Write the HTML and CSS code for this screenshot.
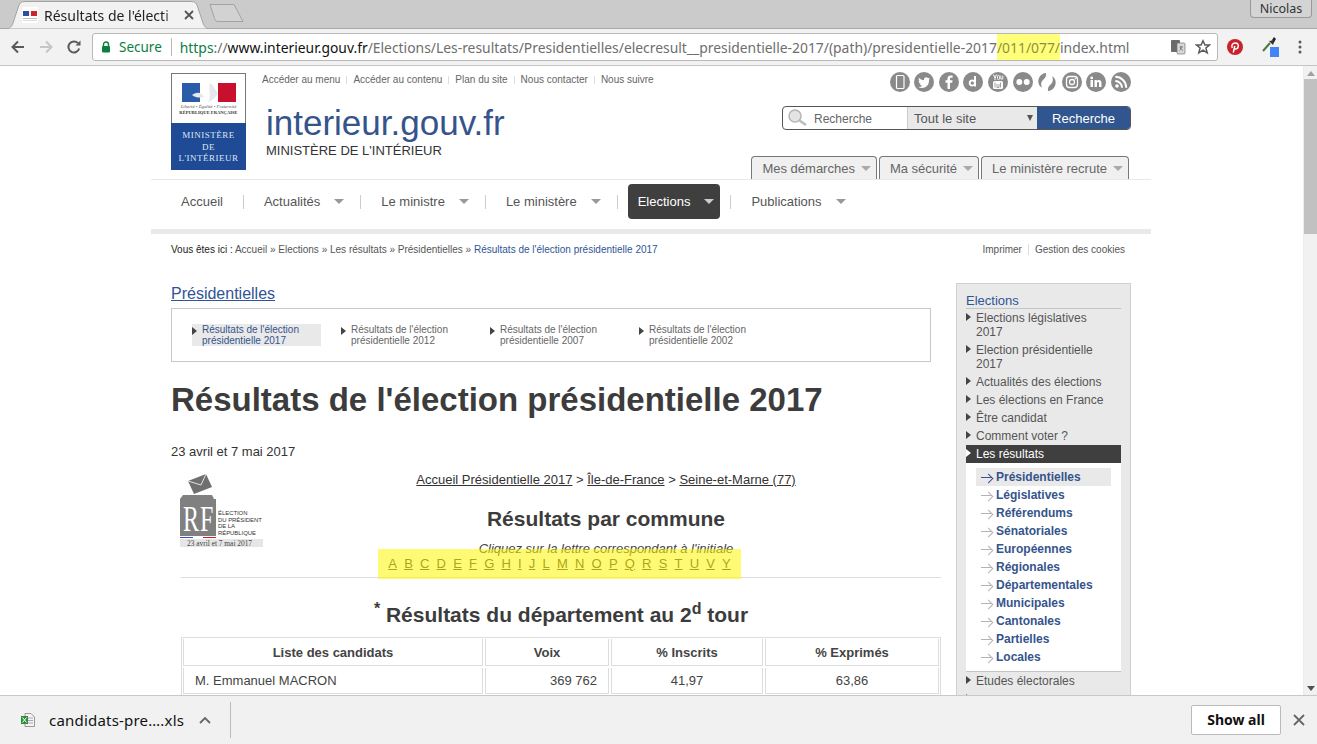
FILE: index.html
```html
<!DOCTYPE html>
<html lang="fr">
<head>
  <meta charset="UTF-8"/>
  <title>Résultats de l'élection présidentielle 2017</title>
  <link rel="stylesheet" href="styles.css">
</head>
<body>
  <!-- barre du navigateur -->
  <div class="tabstrip">
    <div class="tab">
      <svg class="tab-shape" width="205" height="28" viewBox="0 0 205 28"><path d="M0 28C5 28 7 25 8 22L14 4C15 1.500 17 .5 20 .5H186C189 .5 191 1.500 192 4L198 22C199 25 201 28 205 28Z" fill="#f2f2f2" stroke="#a3a3a3"/></svg>
      <svg class="favicon" width="16" height="16" viewBox="0 0 16 16"><rect width="16" height="16" fill="#fff"/><rect x="1" y="4" width="6" height="5" fill="#2a4f9c"/><rect x="7" y="4" width="2" height="5" fill="#eee"/><rect x="9" y="4" width="6" height="5" fill="#d0222c"/><rect x="1" y="11" width="14" height="1" fill="#bbb"/><rect x="1" y="13" width="14" height="1" fill="#ddd"/></svg>
      <span class="tab-title">Résultats de l'électi</span>
      <svg class="tab-close" width="10" height="10" viewBox="0 0 10 10"><path d="M1 1L9 9M9 1L1 9" stroke="#555" stroke-width="1.800"/></svg>
    </div>
    <svg class="newtab" width="36" height="20" viewBox="0 0 36 20"><path d="M1 1.500H25L34 18.500H9C7 18.500 6 17 5.500 15.500Z" fill="#d2d2d2" stroke="#a3a3a3"/></svg>
    <div class="user">Nicolas</div>
  </div>
  <div class="toolbar">
    <svg class="tb-icon" width="16" height="16" viewBox="0 0 16 16"><path d="M14 8H3M8 2.500L2.500 8L8 13.500" fill="none" stroke="#5a5a5a" stroke-width="2"/></svg>
    <svg class="tb-icon" width="16" height="16" viewBox="0 0 16 16"><path d="M2 8H13M8 2.500L13.500 8L8 13.500" fill="none" stroke="#c6c6c6" stroke-width="2"/></svg>
    <svg class="tb-icon" width="16" height="16" viewBox="0 0 16 16"><path d="M13.200 9.500A5.500 5.500 0 1 1 12 4.200" fill="none" stroke="#5a5a5a" stroke-width="2"/><path d="M9.500 6.500H14.500V1.500Z" fill="#5a5a5a"/></svg>
    <div class="omnibox">
      <svg class="lock" width="10" height="12" viewBox="0 0 10 12"><path d="M2.500 5.500V3.500A2.500 2.500 0 0 1 7.500 3.500V5.500" fill="none" stroke="#0b8043" stroke-width="1.400"/><rect x="1" y="5" width="8" height="6.500" rx="1" fill="#0b8043"/></svg>
      <span class="secure">Secure</span>
      <span class="url"><span class="url-green">https</span><span class="url-grey">://</span><span class="url-host">www.interieur.gouv.fr</span><span class="url-grey">/Elections/Les-resultats/Presidentielles/elecresult__presidentielle-2017/(path)/presidentielle-2017</span><mark class="url-mark">/011/077/</mark><span class="url-grey">index.html</span></span>
      <svg class="omni-translate" width="16" height="16" viewBox="0 0 16 16"><rect x="1" y="1" width="9" height="12" rx="1" fill="#6a6a6a"/><rect x="7" y="4" width="8" height="11" rx="1" fill="#d8d8d8" stroke="#777" stroke-width=".7"/><path d="M9.500 8H13M11 7V8.200C11 10 10.300 11 9.500 11.500M10.500 9C11 10.300 12 11 13 11.500" fill="none" stroke="#666" stroke-width=".8"/></svg>
      <svg class="omni-star" width="16" height="16" viewBox="0 0 16 16"><path d="M8 1.800L9.900 6H14.500L10.900 9L12.200 13.800L8 11.200L3.800 13.800L5.100 9L1.500 6H6.100Z" fill="none" stroke="#5a5a5a" stroke-width="1.500"/></svg>
    </div>
    <svg class="ext-pin" width="16" height="16" viewBox="0 0 16 16"><circle cx="8" cy="8" r="8" fill="#c8232c"/><path d="M6.300 13.500L7.800 6.800M5.300 9C4 6.500 5.500 4 8.200 4C10.600 4 11.800 5.700 11.200 7.800C10.600 10 8.400 10.600 7.200 9.200" fill="none" stroke="#fff" stroke-width="1.500"/></svg>
    <svg class="ext-drop" width="20" height="22" viewBox="0 0 20 22"><path d="M2 15L9 7" stroke="#4a7d3a" stroke-width="2"/><path d="M8 5L12 9L14 4Z" fill="#333"/><path d="M11 4L13 1L15 3L13 6Z" fill="#222"/><rect x="9" y="11" width="9" height="10" fill="#4285f4"/></svg>
    <svg class="ext-menu" width="4" height="14" viewBox="0 0 4 14"><circle cx="2" cy="2" r="1.500" fill="#5a5a5a"/><circle cx="2" cy="7" r="1.500" fill="#5a5a5a"/><circle cx="2" cy="12" r="1.500" fill="#5a5a5a"/></svg>
  </div>

  <div class="viewport">
    <div class="page-scroll">
      <div class="page">
        <header class="site-head">
          <div class="logo">
            <div class="logo-top">
              <svg width="54" height="19" viewBox="0 0 54 19"><rect width="18" height="19" fill="#2a5caa"/><rect x="18" width="18" height="19" fill="#fff"/><rect x="36" width="18" height="19" fill="#c8102e"/><path d="M10 12C16 8 20 10 22 14C18 15 14 15 10 12ZM28 0C33 3 33 8 36 10C34 14 30 18 26 19C30 13 26 6 28 0Z" fill="#e7e7ee"/></svg>
              <span class="logo-motto">Liberté • Égalité • Fraternité</span>
              <span class="logo-rep">RÉPUBLIQUE FRANÇAISE</span>
            </div>
            <div class="logo-bottom">MINISTÈRE<br>DE<br>L'INTÉRIEUR</div>
          </div>
          <div class="head-mid">
            <ul class="access">
              <li>Accéder au menu</li>
              <li>Accéder au contenu</li>
              <li>Plan du site</li>
              <li>Nous contacter</li>
              <li>Nous suivre</li>
            </ul>
            <div class="site-name">interieur.gouv.fr</div>
            <div class="site-sub">MINISTÈRE DE L'INTÉRIEUR</div>
          </div>
          <div class="head-right">
            <div class="socials">
              <svg class="soc" viewBox="0 0 20 20"><circle cx="10" cy="10" r="10"/><rect x="6.500" y="3.500" width="7.500" height="13" rx="1" fill="none" stroke="#fff" stroke-width="1.200"/></svg>
              <svg class="soc" viewBox="0 0 20 20"><circle cx="10" cy="10" r="10"/><path d="M15.800 6.300C15.300 6.600 14.800 6.700 14.300 6.800C14.800 6.500 15.200 6 15.400 5.400C14.900 5.700 14.300 5.900 13.800 6C12.500 4.600 10 5.600 10 7.600V8.200C7.900 8.200 6.200 7.200 5 5.700C4.300 7 4.700 8.500 5.800 9.300C5.400 9.300 5 9.200 4.600 9C4.600 10.400 5.500 11.500 6.900 11.800C6.500 11.900 6.100 11.900 5.700 11.800C6.100 13 7.100 13.700 8.300 13.800C7 14.800 5.700 15 4.300 14.900C9 17.500 15 15 15 8.500V8C15.100 7.600 15.500 7 15.800 6.300Z" fill="#fff"/></svg>
              <svg class="soc" viewBox="0 0 20 20"><circle cx="10" cy="10" r="10"/><path d="M11 17V10.800H13.200L13.500 8.300H11V6.900C11 6.200 11.300 5.800 12.100 5.800H13.600V3.600C13.300 3.500 12.500 3.500 11.700 3.500C9.800 3.500 8.500 4.600 8.500 6.600V8.300H6.500V10.800H8.500V17Z" fill="#fff"/></svg>
              <svg class="soc" viewBox="0 0 20 20"><circle cx="10" cy="10" r="10"/><path d="M13 4V14.500H11V13.800C9 15.500 5.700 14.200 5.700 11C5.700 8 8.700 6.600 11 8V4ZM9.200 9.600C8.200 9.600 7.700 10.300 7.700 11.100C7.700 12 8.300 12.700 9.200 12.700C10.200 12.700 11 12 11 11.100C11 10.200 10.200 9.600 9.200 9.600Z" fill="#fff"/></svg>
              <svg class="soc" viewBox="0 0 20 20"><circle cx="10" cy="10" r="10"/><path d="M5.500 2.500L7 6V8M8.500 2.500L7 6" fill="none" stroke="#fff" stroke-width="1"/><rect x="9.500" y="3.500" width="2" height="4" rx=".8" fill="none" stroke="#fff" stroke-width=".9"/><path d="M12.800 3.500V7H14.800V3.500" fill="none" stroke="#fff" stroke-width=".9"/><rect x="5" y="9" width="10" height="8" rx="1.500" fill="#fff"/><path d="M7 10.500V15.500M9 12V15.500H11V12M12.500 10.500V15.500" fill="none" stroke="#8a8a8a" stroke-width=".8"/></svg>
              <svg class="soc" viewBox="0 0 20 20"><circle cx="10" cy="10" r="10"/><circle cx="6.300" cy="10" r="3" fill="#fff"/><circle cx="13.700" cy="10" r="3" fill="#fff"/></svg>
              <svg class="soc" viewBox="0 0 20 20"><path d="M9 1C4 1.500 .5 6 1.500 11C2 13.500 3.500 15 5 15.500C3.800 13 3.800 10.500 5.500 8.500C7 6.800 9.500 5.500 9 1ZM11 19C16 18.500 19.500 14 18.500 9C18 6.500 16.500 5 15 4.500C16.200 7 16.200 9.500 14.500 11.500C13 13.200 10.500 14.500 11 19Z"/></svg>
              <svg class="soc" viewBox="0 0 20 20"><circle cx="10" cy="10" r="10"/><rect x="4.500" y="4.500" width="11" height="11" rx="3" fill="none" stroke="#fff" stroke-width="1.300"/><circle cx="10" cy="10" r="2.500" fill="none" stroke="#fff" stroke-width="1.300"/><circle cx="13.300" cy="6.700" r=".8" fill="#fff"/></svg>
              <svg class="soc" viewBox="0 0 20 20"><circle cx="10" cy="10" r="10"/><path d="M4.500 8H7V15H4.500ZM5.700 4.500A1.400 1.400 0 1 1 5.700 7.300A1.400 1.400 0 1 1 5.700 4.500ZM8.500 8H10.800V9C11.800 7.300 15.500 7.300 15.500 10.800V15H13V11.300C13 9.500 11 9.500 11 11.300V15H8.500Z" fill="#fff"/></svg>
              <svg class="soc" viewBox="0 0 20 20"><circle cx="10" cy="10" r="10"/><circle cx="6" cy="14" r="1.800" fill="#fff"/><path d="M4.300 9A6.700 6.700 0 0 1 11 15.700M4.300 4.800A10.900 10.900 0 0 1 15.200 15.700" fill="none" stroke="#fff" stroke-width="2"/></svg>
            </div>
            <div class="search">
              <div class="search-input">
                <svg width="20" height="20" viewBox="0 0 20 20"><circle cx="8" cy="8" r="6" fill="#e4e4e4" stroke="#b5b5b5" stroke-width="1.500"/><path d="M12.500 12.500L19 17" stroke="#bbb" stroke-width="2.500"/></svg>
                <span>Recherche</span>
              </div>
              <div class="search-scope"><span>Tout le site</span><i class="scope-arrow"></i></div>
              <div class="search-btn">Recherche</div>
            </div>
            <div class="tools">
              <div class="tool">Mes démarches<i class="caret"></i></div>
              <div class="tool">Ma sécurité<i class="caret"></i></div>
              <div class="tool">Le ministère recrute<i class="caret"></i></div>
            </div>
          </div>
        </header>

        <nav class="mainnav">
          <div class="nav-item nav-home">Accueil</div>
          <div class="nav-item">Actualités<i class="caret"></i></div>
          <div class="nav-item">Le ministre<i class="caret"></i></div>
          <div class="nav-item">Le ministère<i class="caret"></i></div>
          <div class="nav-item nav-active">Elections<i class="caret"></i></div>
          <div class="nav-item nav-last">Publications<i class="caret"></i></div>
        </nav>

        <div class="crumbs">
          <div><b class="crumb-lead">Vous êtes ici :</b> Accueil » Elections » Les résultats » Présidentielles » <span class="crumb-last">Résultats de l'élection présidentielle 2017</span></div>
          <div class="crumb-tools"><span>Imprimer</span><span>Gestion des cookies</span></div>
        </div>

        <div class="columns">
          <main class="content">
            <a class="section-link">Présidentielles</a>
            <ul class="subnav">
              <li class="sub-on">Résultats de l'élection présidentielle 2017</li>
              <li>Résultats de l'élection présidentielle 2012</li>
              <li>Résultats de l'élection présidentielle 2007</li>
              <li>Résultats de l'élection présidentielle 2002</li>
            </ul>
            <h1>Résultats de l'élection présidentielle 2017</h1>
            <p class="dates">23 avril et 7 mai 2017</p>
            <div class="results-head">
              <div class="elect-logo">
                <svg width="83" height="74" viewBox="0 0 83 74">
                  <path d="M8 7L26 0L32 13L14 20Z" fill="#6f6f6f"/><path d="M8 7L21 11L26 0" fill="none" stroke="#fff" stroke-width=".8"/>
                  <path d="M0 25L3 21H32L34 25H36V62H0Z" fill="#808080"/>
                  <text class="rf" transform="translate(3 57) scale(1 1.500)">R</text><text class="rf" transform="translate(20 57) scale(1 1.500)">F</text>
                  <rect x="0" y="63" width="13" height="1" fill="#3355bb"/><rect x="23" y="63" width="13" height="1" fill="#cc2222"/>
                  <rect x="0" y="65" width="83" height="8" fill="#e6e6e6"/>
                </svg>
                <span class="elect-title">ÉLECTION<br>DU PRÉSIDENT<br>DE LA<br>RÉPUBLIQUE</span>
                <span class="elect-date">23 avril et 7 mai 2017</span>
              </div>
              <div class="results-center">
                <div class="path"><u>Accueil Présidentielle 2017</u> &gt; <u>Île-de-France</u> &gt; <u>Seine-et-Marne (77)</u></div>
                <h2>Résultats par commune</h2>
                <p class="hint">Cliquez sur la lettre correspondant à l'initiale</p>
              </div>
            </div>
            <div class="letters">
              <u>A</u><u>B</u><u>C</u><u>D</u><u>E</u><u>F</u><u>G</u><u>H</u><u>I</u><u>J</u><u>L</u><u>M</u><u>N</u><u>O</u><u>P</u><u>Q</u><u>R</u><u>S</u><u>T</u><u>U</u><u>V</u><u>Y</u>
              <span class="marker"></span>
            </div>
            <hr class="rule">
            <h3><sup>*</sup> Résultats du département au 2<sup>d</sup> tour</h3>
            <table class="results">
              <thead><tr><th class="col-name">Liste des candidats</th><th class="col-voix">Voix</th><th class="col-ins">% Inscrits</th><th class="col-exp">% Exprimés</th></tr></thead>
              <tbody>
                <tr><td>M. Emmanuel MACRON</td><td class="num">369 762</td><td class="mid">41,97</td><td class="mid">63,86</td></tr>
              </tbody>
            </table>
          </main>
          <aside class="side">
            <div class="side-title">Elections</div>
            <ul class="side-list">
              <li>Elections législatives<br>2017</li>
              <li>Election présidentielle<br>2017</li>
              <li>Actualités des élections</li>
              <li>Les élections en France</li>
              <li>Être candidat</li>
              <li>Comment voter ?</li>
              <li class="side-on">Les résultats</li>
            </ul>
            <ul class="side-sub">
              <li class="sub-cur">Présidentielles</li>
              <li>Législatives</li>
              <li>Référendums</li>
              <li>Sénatoriales</li>
              <li>Européennes</li>
              <li>Régionales</li>
              <li>Départementales</li>
              <li>Municipales</li>
              <li>Cantonales</li>
              <li>Partielles</li>
              <li>Locales</li>
            </ul>
            <ul class="side-list">
              <li>Etudes électorales</li>
              <li class="side-more"></li>
            </ul>
          </aside>
        </div>
      </div>
    </div>
    <div class="scrollbar">
      <i class="sb-up"></i>
      <div class="sb-track"><div class="sb-thumb"></div></div>
      <i class="sb-down"></i>
    </div>
  </div>

  <div class="downloads">
    <div class="dl-item">
      <svg width="14" height="14" viewBox="0 0 14 14"><path d="M4 .5H10L13.500 4V13.500H4Z" fill="#f3f3f3" stroke="#999"/><path d="M7 5H12M7 7.500H12M7 10H12" stroke="#aaa"/><rect x="0" y="3" width="7" height="8" fill="#2e8b3e"/><path d="M1.500 4.500L5.500 9.500M5.500 4.500L1.500 9.500" stroke="#fff" stroke-width="1"/></svg>
      <span class="dl-name">candidats-pre….xls</span>
      <svg width="12" height="8" viewBox="0 0 12 8"><path d="M1 7L6 2L11 7" fill="none" stroke="#666" stroke-width="1.800"/></svg>
    </div>
    <div class="dl-spacer"></div>
    <div class="dl-show">Show all</div>
    <svg class="dl-close" width="12" height="12" viewBox="0 0 12 12"><path d="M1 1L11 11M11 1L1 11" stroke="#666" stroke-width="1.800"/></svg>
  </div>
</body>
</html>
```

FILE: styles.css
```css
* { box-sizing:border-box; }
html, body { margin:0; height:100%; overflow:hidden; }
body { width:1317px; height:744px; display:flex; flex-direction:column; font-family:"Liberation Sans", Arial, sans-serif; color:#444; background:#fff; }
ul { list-style:none; margin:0; padding:0; }
i { display:inline-block; }

/* navigateur */
.tabstrip { height:29px; background:#cbcbcb; border-bottom:1px solid #a8a8a8; display:flex; align-items:flex-end; padding-left:5px; position:relative; flex:none; }
.tab { width:205px; height:28px; display:flex; align-items:center; padding-left:17px; margin-bottom:-1px; font-family:"Noto Sans", sans-serif; font-size:14px; color:#222; position:relative; }
.tab-shape { position:absolute; left:0; top:0; }
.favicon, .tab-title, .tab-close { position:relative; }
.favicon { flex:none; margin-right:6px; }
.tab-title { width:132px; flex:none; white-space:nowrap; -webkit-mask-image:linear-gradient(to right,#000 90%,rgba(0,0,0,.3)); mask-image:linear-gradient(to right,#000 90%,rgba(0,0,0,.3)); }
.tab-close { flex:none; margin-left:8px; }
.newtab { margin:0 0 5px -1px; }
.user { position:absolute; right:5px; top:0; width:62px; height:18px; border:1px solid #999; border-top:none; border-radius:0 0 4px 4px; background:#d4d4d4; font-family:"Noto Sans", sans-serif; font-size:12.5px; color:#333; text-align:center; line-height:17px; }
.toolbar { height:37px; background:#f2f2f2; border-bottom:1px solid #c4c4c4; display:flex; align-items:center; padding-left:10px; flex:none; }
.tb-icon { flex:none; margin-right:12px; }
.omnibox { width:1126px; height:28px; margin:0 0 0 -2px; background:#fff; border:1px solid #b8b8b8; border-radius:3px; display:flex; align-items:center; padding-left:8px; font-family:"Noto Sans", sans-serif; font-size:14px; white-space:nowrap; overflow:hidden; }
.lock { flex:none; }
.secure { color:#0b8043; margin:0 8px 0 8px; padding-right:9px; border-right:1px solid #bbb; line-height:18px; font-size:13.5px; }
.url { flex:1; font-size:13.88px; }
.url-green { color:#0b8043; }
.url-grey { color:#6e6e6e; }
.url-host { color:#111; }
.url-mark { background:#ffff7a; color:#8f8f42; padding:6px 0; }
.omni-translate { flex:none; margin-right:9px; }
.omni-star { flex:none; margin-right:6px; }
.ext-pin { flex:none; margin-left:9px; }
.ext-drop { flex:none; margin:0 0 0 18px; }
.ext-menu { flex:none; margin-left:17px; }

.viewport { flex:1; display:flex; min-height:0; overflow:hidden; }
.page-scroll { width:1303px; overflow:hidden; background:#fff; }
.page { width:1000px; margin-left:151px; font-size:13px; }
.scrollbar { width:14px; background:#f1f1f1; display:flex; flex-direction:column; align-items:center; border-left:1px solid #ececec; }
.sb-up { width:0; height:0; border:4px solid transparent; border-bottom:5px solid #a0a0a0; border-top:0; margin:5px 0 4px; }
.sb-down { width:0; height:0; border:4px solid transparent; border-top:5px solid #505050; border-bottom:0; margin:4px 0 4px; }
.sb-track { flex:1; width:100%; }
.sb-thumb { height:155px; background:#c1c1c1; margin-top:-1px; }

/* en-tête */
.site-head { height:114px; padding:7px 20px 0 20px; display:flex; border-bottom:1px solid #e9e9e9; }
.logo { width:75px; height:97px; flex:none; border:1px solid #777; border-bottom:none; display:flex; flex-direction:column; text-align:center; }
.logo-top { height:49px; background:#fff; display:flex; flex-direction:column; align-items:center; padding-top:9px; }
.logo-motto { font:italic 4.8px/5px "Liberation Serif", serif; color:#555; margin-top:2px; white-space:nowrap; }
.logo-rep { font:bold 4.6px/5px "Liberation Serif", serif; color:#333; margin-top:1px; white-space:nowrap; }
.logo-bottom { flex:1; margin:0 -1px; background:#1e4a96; color:#dfe6f2; font:9px/11.500px "Liberation Serif", serif; letter-spacing:.5px; padding-top:7px; white-space:nowrap; }
.head-mid { width:500px; padding-left:16px; }
.access { display:flex; font-size:10px; color:#666; }
.access li { padding-right:6px; margin-right:6px; border-right:1px solid #ddd; height:8px; line-height:8px; margin-top:3px; white-space:nowrap; }
.access li:last-child { border:none; }
.site-name { font-size:35px; line-height:40px; color:#35548c; margin:19px 0 0 4px; }
.site-sub { font-size:13px; line-height:14px; color:#333; margin:1px 0 0 4px; }
.head-right { flex:1; display:flex; flex-direction:column; align-items:flex-end; }
.socials { display:flex; gap:4.600px; margin-top:-1px; height:20px; }
.soc { width:20px; height:20px; fill:#8a8a8a; flex:none; }
.search { width:349px; height:24px; margin-top:14px; display:flex; border:1px solid #555; border-radius:4px; overflow:hidden; font-size:13px; }
.search-input { width:124px; display:flex; align-items:center; padding-left:4px; font-size:12px; color:#666; flex:none; }
.search-input span { margin:1px 0 0 7px; }
.search-scope { flex:1; background:#e9e9e9; border-left:1px solid #ccc; display:flex; align-items:center; padding:0 4px 0 6px; color:#555; justify-content:space-between; }
.scope-arrow { width:0; height:0; border:3.500px solid transparent; border-top:6px solid #555; border-bottom:0; }
.search-btn { width:93px; background:#30558f; color:#fff; text-align:center; line-height:23px; }
.tools { display:flex; gap:2px; margin-top:26px; margin-right:2px; }
.tool { height:23px; border:1px solid #777; border-bottom:none; border-radius:4px 4px 0 0; background:#f0f0f0; padding:0 2px 0 10px; font-size:13px; line-height:23px; color:#666; display:flex; align-items:center; white-space:nowrap; }
.caret { width:0; height:0; border:5px solid transparent; border-top:5px solid #aaa; border-bottom:0; margin:0 3px 0 6px; }

.mainnav { display:flex; align-items:flex-start; padding:4px 0 0 30px; border-bottom:5px solid #e9e9e9; box-sizing:content-box; height:45px; }
.nav-item { height:35px; font-size:13px; color:#555; display:flex; align-items:center; padding-right:17px; position:relative; margin-right:20px; white-space:nowrap; }
.nav-item .caret { margin:0 0 0 14px; border-top-color:#999; }
.nav-item::after { content:""; position:absolute; right:0; top:11px; height:14px; border-right:1px solid #ccc; }
.nav-home { padding-right:21px; }
.nav-active { background:#3f3f3f; color:#fff; border-radius:4px; margin:0 31px 0 -10px; padding:0 6px 0 10px; }
.nav-active .caret { border-top-color:#ccc; }
.nav-active::after { right:-11px; }
.nav-last::after { display:none; }

.crumbs { display:flex; justify-content:space-between; padding:10px 26px 0 20px; font-size:10px; line-height:12px; color:#555; height:49px; }
.crumb-lead { font-weight:normal; color:#222; }
.crumb-last { color:#2f5596; }
.crumb-tools span { padding:0 0 0 6px; margin-left:6px; border-left:1px solid #ddd; }
.crumb-tools span:first-child { border:none; }

.columns { display:flex; padding:0 20px; gap:25px; align-items:flex-start; }
.content { width:760px; flex:none; }
.section-link { display:block; font-size:16px; line-height:20px; color:#2f5596; text-decoration:underline; margin-top:1px; }
.subnav { display:flex; border:1px solid #c8c8c8; height:54px; margin-top:4px; padding:15px 0 0 20px; }
.subnav li { width:129px; margin-right:20px; font-size:10px; line-height:11px; color:#666; padding:0 0 0 10px; position:relative; height:22px; }
.subnav li::before { content:""; position:absolute; left:0; top:3px; border:4px solid transparent; border-left:5px solid #444; border-right:0; }
.subnav .sub-on { background:#e9e9e9; color:#35548c; }
h1 { font-size:33px; line-height:38px; font-weight:bold; color:#3c3c3c; margin:19px 0 0; white-space:nowrap; }
.dates { font-size:13px; line-height:16px; margin:25px 0 0; color:#333; }
.results-head { display:flex; margin:6px -10px 0 0; }
.elect-logo { width:100px; flex:none; position:relative; padding:8px 0 0 9px; height:91px; }
.rf { font:24px "Liberation Serif", serif; fill:#fff; }
.elect-title { position:absolute; left:47px; top:44px; font-size:5.900px; line-height:6.600px; color:#333; white-space:nowrap; }
.elect-date { position:absolute; left:16px; top:73px; font:7.400px "Liberation Serif", serif; color:#444; white-space:nowrap; }
.results-center { flex:1; text-align:center; }
.path { font-size:13px; line-height:16px; color:#333; margin-top:6px; }
h2 { font-size:21px; line-height:24px; margin:19px 0 0; color:#3c3c3c; }
.hint { font-size:13px; line-height:14px; font-style:italic; color:#444; margin:11px 0 0; }
.letters { position:relative; display:flex; justify-content:center; gap:7.200px; font-size:13px; line-height:14px; color:#444; margin:0 -10px 6px 10px; padding-right:3px; }
.marker { position:absolute; left:197px; top:-8px; width:363px; height:30px; background:rgba(255,245,0,.55); }
.rule { border:0; border-top:1px solid #ddd; margin:0 -10px 0 10px; }
h3 { font-size:21px; line-height:24px; text-align:center; margin:25px 0 0 20px; color:#3c3c3c; }
h3 sup { line-height:0; font-size:16px; }
.results { margin:10px -10px 0 10px; width:760px; box-shadow:inset 1px 1px 0 #ddd, inset -1px 0 0 #ddd; border-spacing:2px; font-size:13px; table-layout:fixed; color:#444; }
.results th, .results td { border:1px solid #ddd; border-top:none; padding:0 11px; height:26px; }
.results th { height:27px; }
.col-name { width:300px; }
.col-voix { width:124px; }
.col-ins { width:152px; }
.num { text-align:right; }
.mid { text-align:center; }

/* colonne droite */
.side { width:175px; flex:none; background:#e9e9e9; border:1px solid #d0d0d0; border-bottom:none; padding:9px 9px 20px; font-size:12px; color:#555; }
.side-title { font-size:13px; line-height:15px; color:#2f5596; border-bottom:1px solid #c4c4c4; }
.side-list li { position:relative; padding:2px 0 2px 10px; line-height:14px; white-space:nowrap; }
.side-list li::before { content:""; position:absolute; left:0; top:4px; border:4px solid transparent; border-left:5px solid #444; border-right:0; }
.side-list .side-on { background:#3f3f3f; color:#fff; }
.side-list .side-on::before { border-left-color:#fff; }
.side-more { height:18px; }
.side-sub { background:#fff; padding:5px 10px; border-bottom:1px solid #c4c4c4; }
.side-sub li { font-weight:bold; color:#35548c; line-height:18px; padding-left:20px; position:relative; }
.side-sub li::before { content:""; position:absolute; left:5px; top:9px; width:11px; height:1px; background:#b4b4b4; }
.side-sub li::after { content:""; position:absolute; left:8.500px; top:6.500px; width:6px; height:6px; border:solid #b4b4b4; border-width:1px 1px 0 0; transform:rotate(45deg); }
.side-sub .sub-cur { background:#e9e9e9; }
.side-sub .sub-cur::before { background:#35548c; }
.side-sub .sub-cur::after { border-color:#35548c; }

/* téléchargements */
.downloads { height:49px; background:#f1f1f1; border-top:1px solid #c8c8c8; display:flex; align-items:center; flex:none; font-family:"Noto Sans", sans-serif; position:relative; z-index:1; }
.dl-item { width:231px; height:36px; display:flex; align-items:center; padding-left:21px; border-right:1px solid #bbb; }
.dl-name { font-size:15px; letter-spacing:.2px; color:#111; margin:0 15px 0 14px; white-space:nowrap; }
.dl-spacer { flex:1; }
.dl-show { width:90px; height:30px; background:#fff; border:1px solid #bbb; border-radius:2px; text-align:center; font-size:14px; font-weight:bold; line-height:28px; color:#111; margin-right:12px; }
.dl-close { margin-right:12px; }
```
